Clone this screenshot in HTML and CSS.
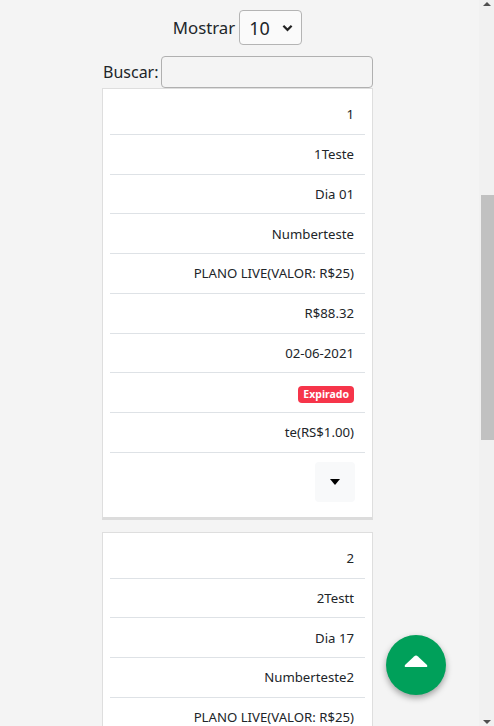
FILE: index.html
```html
<!DOCTYPE html>
<html lang="pt-BR">
<head>
<meta charset="utf-8">
<title>Planos</title>
<link rel="stylesheet" href="styles.css">
</head>
<body>
<div class="wrap">
  <div class="length">
    <label>Mostrar
      <span class="select">10
        <svg class="chev" viewBox="0 0 12 8" width="11" height="8"><path d="M1.5 1.5 L6 6 L10.5 1.5" fill="none" stroke="#222" stroke-width="2.4"/></svg>
      </span>
    </label>
  </div>
  <div class="filter">
    <label>Buscar:</label>
    <span class="search"></span>
  </div>

  <div class="card">
    <div class="row">1</div>
    <div class="row">1Teste</div>
    <div class="row">Dia 01</div>
    <div class="row">Numberteste</div>
    <div class="row">PLANO LIVE(VALOR: R$25)</div>
    <div class="row">R$88.32</div>
    <div class="row">02-06-2021</div>
    <div class="row"><span class="badge">Expirado</span></div>
    <div class="row">te(RS$1.00)</div>
    <div class="row row-btn">
      <span class="btn"><svg viewBox="0 0 10 6" width="10" height="6"><path d="M0 0 H10 L5 6 Z" fill="#000"/></svg></span>
    </div>
  </div>

  <div class="card">
    <div class="row">2</div>
    <div class="row">2Testt</div>
    <div class="row">Dia 17</div>
    <div class="row">Numberteste2</div>
    <div class="row">PLANO LIVE(VALOR: R$25)</div>
    <div class="row">R$88.32</div>
  </div>
</div>

<a class="fab" href="#"><svg viewBox="0 0 26 14" width="26" height="14"><path d="M13 1.5 Q14 1.5 15 2.4 L24 11 Q25 13 23 13 H3 Q1 13 2 11 L11 2.4 Q12 1.5 13 1.5 Z" fill="#fff"/></svg></a>

<div class="scrollbar">
  <span class="arrow up"></span>
  <span class="track"><span class="thumb"></span></span>
  <span class="arrow down"></span>
</div>
</body>
</html>
```

FILE: styles.css
```css
html, body {
  margin: 0;
  padding: 0;
}
body {
  height: 726px;
  overflow: hidden;
  background: #f4f4f4;
  font-family: "Noto Sans", "Open Sans", sans-serif;
  color: #212529;
}
.wrap {
  width: 271px;
  margin-left: 102px;
  padding-top: 10px;
}
.length {
  text-align: center;
  font-size: 16.8px;
  color: #212529;
  height: 46px;
}
.length label {
  display: inline-flex;
  align-items: center;
  gap: 4px;
}
.select {
  display: inline-flex;
  align-items: center;
  justify-content: space-between;
  box-sizing: border-box;
  width: 63px;
  height: 35px;
  padding: 0 8px 0 9px;
  border: 1px solid #b4b4b4;
  border-radius: 4px;
  background: #fafafa;
  font-size: 18px;
}
.filter {
  display: flex;
  align-items: center;
  gap: 2px;
  height: 32px;
  font-size: 16px;
}
.filter label {
  padding-left: 1px;
}
.search {
  flex: 1;
  box-sizing: border-box;
  height: 32px;
  border: 1px solid #b0b0b0;
  border-radius: 4px;
  background: #f4f4f4;
}
.card {
  background: #fff;
  border: 1px solid #dedede;
  border-bottom: 3px solid #dcdcdc;
  padding: 6px 7px 15px;
  margin-bottom: 12px;
}
.row {
  height: 38.75px;
  border-bottom: 1px solid #dee2e6;
  display: flex;
  align-items: center;
  justify-content: flex-end;
  padding-right: 11px;
  font-size: 13.2px;
  color: #212529;
}
.row-btn {
  height: auto;
  border-bottom: 0;
  padding-top: 9px;
}
.badge {
  display: inline-block;
  margin-top: 3px;
  background: #f6354a;
  color: #fff;
  font-weight: 700;
  font-size: 10.5px;
  line-height: 17px;
  padding: 0 5px;
  border-radius: 4px;
}
.btn {
  width: 40px;
  height: 40px;
  border-radius: 4px;
  background: #f8f9fa;
  display: flex;
  align-items: center;
  justify-content: center;
  margin-right: -1px;
}
.fab {
  position: fixed;
  left: 386px;
  top: 635px;
  width: 60px;
  height: 60px;
  border-radius: 50%;
  background: #00a05a;
  box-shadow: 0 3px 6px rgba(0,0,0,0.35);
  display: flex;
  align-items: center;
  justify-content: center;
}
.fab svg {
  margin-top: -9px;
}
.scrollbar {
  position: fixed;
  right: 0;
  top: 0;
  width: 15px;
  height: 726px;
  background: #f1f1f1;
  display: flex;
  flex-direction: column;
}
.arrow {
  height: 17px;
  display: flex;
  justify-content: center;
  align-items: center;
}
.arrow::before {
  content: "";
  border-left: 4px solid transparent;
  border-right: 4px solid transparent;
}
.arrow.up::before {
  border-bottom: 4px solid #505050;
  margin-top: -9px;
}
.arrow.down::before {
  border-top: 4px solid #505050;
  margin-top: 9px;
}
.track {
  flex: 1;
  position: relative;
}
.thumb {
  position: absolute;
  left: 2px;
  right: 0;
  top: 178px;
  height: 245px;
  background: #c1c1c1;
}
```
